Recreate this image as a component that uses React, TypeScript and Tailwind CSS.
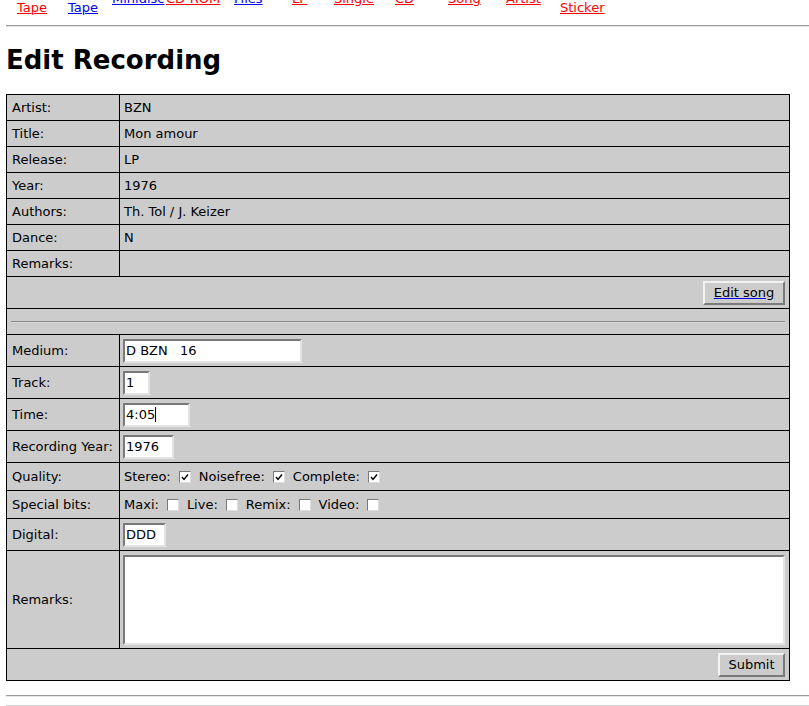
import React from 'react';

const navLinks = [
  { first: 'Audio', label: 'Tape', color: 'text-[#ff0000]', w: 'w-[51px]', two: true },
  { first: 'Video', label: 'Tape', color: 'text-[#0000ee]', w: 'w-[44px]', two: true },
  { label: 'Minidisc', color: 'text-[#0000ee]', w: 'w-[54px]' },
  { label: 'CD-ROM', color: 'text-[#ff0000]', w: 'w-[68px]' },
  { label: 'Files', color: 'text-[#0000ee]', w: 'w-[58px]' },
  { label: 'LP', color: 'text-[#ff0000]', w: 'w-[42px]' },
  { label: 'Single', color: 'text-[#ff0000]', w: 'w-[61px]' },
  { label: 'CD', color: 'text-[#ff0000]', w: 'w-[53px]' },
  { label: 'Song', color: 'text-[#ff0000]', w: 'w-[58px]' },
  { label: 'Artist', color: 'text-[#ff0000]', w: 'w-[54px]' },
  { first: 'Print', label: 'Sticker', color: 'text-[#ff0000]', w: 'w-[60px]', two: true },
];

const songRows: [string, string][] = [
  ['Artist:', 'BZN'],
  ['Title:', 'Mon amour'],
  ['Release:', 'LP'],
  ['Year:', '1976'],
  ['Authors:', 'Th. Tol / J. Keizer'],
  ['Dance:', 'N'],
  ['Remarks:', ''],
];

const inset = 'bg-white border-2 border-t-[#7a7a7a] border-l-[#7a7a7a] border-b-[#e4e4e4] border-r-[#e4e4e4]';
const outset = 'bg-[#cccccc] border-2 border-t-[#f2f2f2] border-l-[#f2f2f2] border-b-[#7a7a7a] border-r-[#7a7a7a]';

function Field({ value, w, caret }: { value: string; w: string; caret?: boolean }) {
  return (
    <div className={`${inset} ${w} h-[24px] -ml-[1px] pl-[1px] flex items-center leading-none`}>
      <span className="whitespace-pre">{value}</span>
      {caret && <span className="w-[1px] h-[15px] bg-black" />}
    </div>
  );
}

function Check({ on }: { on?: boolean }) {
  return (
    <span className="w-[12px] h-[12px] mx-[8px] bg-white border border-t-[#7a7a7a] border-l-[#7a7a7a] border-b-[#dcdcdc] border-r-[#dcdcdc] flex items-center justify-center">
      {on && (
        <svg width="10" height="10" viewBox="0 0 10 10">
          <polyline points="2,5 4,7.5 8,2.5" fill="none" stroke="black" strokeWidth="1.4" />
        </svg>
      )}
    </span>
  );
}

function Row({ label, h, first, children }: { label: string; h: string; first?: boolean; children?: React.ReactNode }) {
  return (
    <div className={`flex ${first ? '' : 'border-t border-black'} ${h}`}>
      <div className="w-[113px] shrink-0 border-r border-black pl-[5px] pr-[3px] flex items-center">{label}</div>
      <div className="flex-1 px-[4px] flex items-center">{children}</div>
    </div>
  );
}

export default function App() {
  return (
    <div className="min-h-screen bg-white text-black font-['DejaVu_Sans',sans-serif] text-[13px] overflow-hidden">
      <nav className="-mt-[15px] h-[30px] flex items-center pl-[17px] leading-[15px]">
        {navLinks.map((l, i) => (
          <div key={i} className={`${l.w} shrink-0 ${l.two ? '' : 'mb-[3px]'}`}>
            <a href="#" className={`${l.color} underline flex flex-col items-start`}>
              {l.two && <span>{l.first}</span>}
              <span>{l.label}</span>
            </a>
          </div>
        ))}
      </nav>
      <div className="mt-[10px] ml-[6px] border-t border-[#9a9a9a] border-b border-b-[#e6e6e6]" />

      <h1 className="mt-[18px] ml-[6px] text-[26px] leading-[30px] font-bold">Edit Recording</h1>

      <div className="mt-[19px] ml-[6px] w-[784px] border border-black bg-[#cccccc] leading-[15px]">
        {songRows.map(([l, v], i) => (
          <Row key={l} label={l} first={i === 0} h={i === 0 ? 'h-[25px]' : 'h-[26px]'}>{v}</Row>
        ))}
        <div className="h-[32px] border-t border-black px-[4px] flex items-center justify-end">
          <button className={`${outset} w-[82px] h-[24px] text-black underline decoration-[#0000ee] leading-none`}>Edit song</button>
        </div>
        <div className="h-[26px] border-t border-black px-[4px] flex items-center">
          <div className="w-full border-t border-[#8a8a8a] border-b border-b-[#d8d8d8]" />
        </div>
        <Row label="Medium:" h="h-[32px]"><Field value="D BZN   16" w="w-[179px]" /></Row>
        <Row label="Track:" h="h-[32px]"><Field value="1" w="w-[27px]" /></Row>
        <Row label="Time:" h="h-[32px]"><Field value="4:05" w="w-[67px]" caret /></Row>
        <Row label="Recording Year:" h="h-[32px]"><Field value="1976" w="w-[51px]" /></Row>
        <Row label="Quality:" h="h-[28px]">
          <span>Stereo:</span><Check on />
          <span>Noisefree:</span><Check on />
          <span>Complete:</span><Check on />
        </Row>
        <Row label="Special bits:" h="h-[28px]">
          <span>Maxi:</span><Check />
          <span>Live:</span><Check />
          <span>Remix:</span><Check />
          <span>Video:</span><Check />
        </Row>
        <Row label="Digital:" h="h-[32px]"><Field value="DDD" w="w-[43px]" /></Row>
        <Row label="Remarks:" h="h-[98px]">
          <div className={`${inset} -ml-[1px] w-[662px] h-[90px]`} />
        </Row>
        <div className="h-[32px] border-t border-black px-[4px] flex items-center justify-end">
          <button className={`${outset} w-[67px] h-[24px] text-black leading-none`}>Submit</button>
        </div>
      </div>

      <div className="mt-[14px] ml-[6px] border-t border-[#9a9a9a] border-b border-b-[#e6e6e6]" />
      <div className="mt-[8px] ml-[6px] border-t border-[#d0d0d0]" />
    </div>
  );
}
